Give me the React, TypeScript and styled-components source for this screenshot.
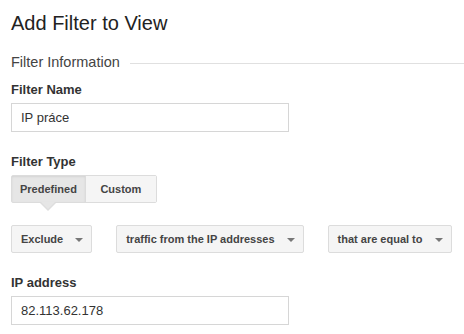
import { createGlobalStyle, styled } from 'styled-components';

const GlobalStyle = createGlobalStyle`
  html, body {
    margin: 0;
    padding: 0;
    background: #fff;
  }
  body {
    font-family: 'Liberation Sans', Arial, sans-serif;
    color: #333;
  }
`;

const SELECTS = ['Exclude', 'traffic from the IP addresses', 'that are equal to'];

const App = () => {
  return (
    <>
      <GlobalStyle />
      <Page>
        <Title>Add Filter to View</Title>
        <SectionHeader>
          <SectionName>Filter Information</SectionName>
          <SectionLine />
        </SectionHeader>

        <Field $first>
          <Label>Filter Name</Label>
          <TextInput defaultValue="IP práce" />
        </Field>

        <Field>
          <Label>Filter Type</Label>
          <Segmented>
            <Segment $active>Predefined</Segment>
            <Segment>Custom</Segment>
          </Segmented>
        </Field>

        <SelectRow>
          {SELECTS.map((item) => (
            <Select key={item}>
              <span>{item}</span>
              <Caret />
            </Select>
          ))}
        </SelectRow>

        <Field>
          <Label>IP address</Label>
          <TextInput defaultValue="82.113.62.178" />
        </Field>
      </Page>
    </>
  );
};

export default App;

const Page = styled.div`
  display: flex;
  flex-direction: column;
  padding: 10px 0 0 11px;
`;

const Title = styled.h1`
  margin: 0;
  font-size: 20px;
  line-height: 26px;
  font-weight: normal;
  color: #222;
`;

const SectionHeader = styled.div`
  display: flex;
  align-items: center;
  margin-top: 17px;
  height: 18px;
`;

const SectionName = styled.span`
  font-size: 14.5px;
  line-height: 18px;
  color: #444;
`;

const SectionLine = styled.div`
  flex: 1;
  height: 1px;
  background: #e0e0e0;
  margin: 2px 0 0 10px;
`;

const Field = styled.div<{ $first?: boolean }>`
  display: flex;
  flex-direction: column;
  align-items: flex-start;
  margin-top: ${({ $first }) => ($first ? '11px' : '22px')};
`;

const Label = styled.label`
  font-size: 13px;
  line-height: 16px;
  font-weight: bold;
  color: #333;
  margin-bottom: 5px;
`;

const TextInput = styled.input`
  box-sizing: border-box;
  width: 278px;
  height: 29px;
  padding: 0 9px;
  border: 1px solid #d6d6d6;
  border-radius: 0;
  font-family: 'Liberation Sans', Arial, sans-serif;
  font-size: 13px;
  color: #333;
  outline: none;
`;

const Segmented = styled.div`
  display: flex;
  border: 1px solid #dcdcdc;
  border-radius: 2px;
  height: 28px;
  box-sizing: border-box;
`;

const Segment = styled.div<{ $active?: boolean }>`
  position: relative;
  display: flex;
  align-items: center;
  justify-content: center;
  min-width: 70px;
  padding: 0 8px;
  box-sizing: border-box;
  font-size: 11px;
  font-weight: bold;
  color: #444;
  background: ${({ $active }) => ($active ? '#e6e6e6' : '#f5f5f5')};
  box-shadow: ${({ $active }) => ($active ? 'inset 0 1px 2px rgba(0,0,0,0.08)' : 'none')};
  border-right: ${({ $active }) => ($active ? '1px solid #dcdcdc' : 'none')};
  cursor: pointer;

  &::after {
    content: '';
    display: ${({ $active }) => ($active ? 'block' : 'none')};
    position: absolute;
    left: 50%;
    bottom: -9px;
    margin-left: -8px;
    border-left: 8px solid transparent;
    border-right: 8px solid transparent;
    border-top: 8px solid #dedede;
  }

  &::before {
    content: '';
    display: ${({ $active }) => ($active ? 'block' : 'none')};
    position: absolute;
    left: 50%;
    bottom: -7px;
    margin-left: -7px;
    border-left: 7px solid transparent;
    border-right: 7px solid transparent;
    border-top: 7px solid #e6e6e6;
    z-index: 1;
  }
`;

const SelectRow = styled.div`
  display: flex;
  gap: 24px;
  margin-top: 22px;
`;

const Select = styled.div`
  display: flex;
  align-items: center;
  height: 28px;
  box-sizing: border-box;
  padding: 0 8px 0 9px;
  border: 1px solid #dcdcdc;
  border-radius: 2px;
  background: #f5f5f5;
  font-size: 11px;
  font-weight: bold;
  color: #444;
  cursor: pointer;
`;

const Caret = styled.span`
  margin-left: 12px;
  width: 0;
  height: 0;
  border-left: 4px solid transparent;
  border-right: 4px solid transparent;
  border-top: 4px solid #777;
  margin-top: 2px;
`;
